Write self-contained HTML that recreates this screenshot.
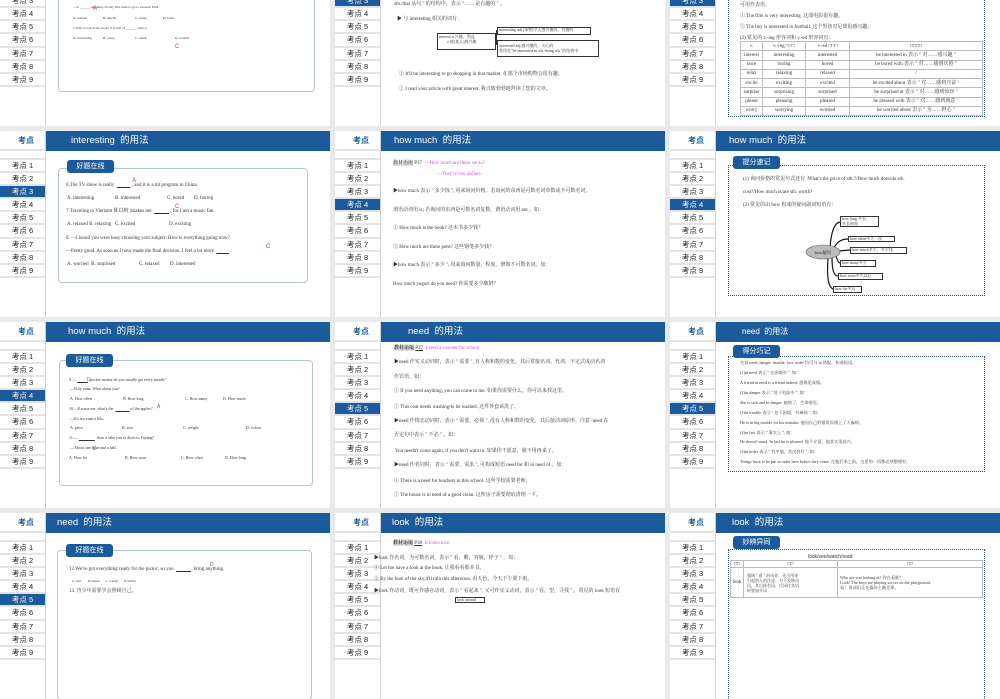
<!DOCTYPE html>
<html><head><meta charset="utf-8"><style>
*{margin:0;padding:0;box-sizing:border-box}
body{width:1000px;height:600px;background:#e9e9e9;position:relative;overflow:hidden;font-family:"Liberation Serif","Noto Serif CJK SC",serif;color:#333}
.s{position:absolute;width:330px;height:186px;background:#fff;overflow:hidden}
.sb{position:absolute;left:0;top:0;width:46px;height:186px;border-right:1px solid #d0d0d0;background:#fff;font-family:"Liberation Sans","Noto Sans CJK SC",sans-serif}
.sh{height:20px;line-height:20px;text-align:right;padding-right:11px;color:#1b5b9b;font-weight:bold;font-size:8px;border-bottom:2px solid #e4e4e4}
.sp{height:9px;border-bottom:2px solid #e4e4e4}
.it{height:13.1px;line-height:12px;font-size:7.5px;text-align:center;border-bottom:2px solid #e4e4e4;color:#222}
.it.a{background:#1b5b9b;color:#fff}
.hd{position:absolute;left:46px;top:0;width:284px;height:20px;background:#1b5b9b;color:#fff;font-family:"Liberation Sans","Noto Sans CJK SC",sans-serif;font-size:9.5px;line-height:20px}
.t{position:absolute;white-space:nowrap;font-size:5px;line-height:6px}
.r{position:absolute;color:#d23a4a;font-size:6px;font-family:"Liberation Sans",sans-serif}
.bx{position:absolute;border:1px solid #b7c4d3;border-radius:4px}
.db{position:absolute;border:1px dotted #2a4d7a}
.lb{position:absolute;width:47px;height:13px;background:#1b5b9b;color:#fff;border-radius:3px;font-family:"Liberation Sans","Noto Sans CJK SC",sans-serif;font-size:7px;line-height:13px;text-align:center}
.m{color:#d64fd6}
.g{background:#ddd}
table{border-collapse:collapse}
td{border:1px solid #bbb;text-align:center;font-size:5px;line-height:5px;padding:0}
.mb{position:absolute;border:1px solid #333;background:#fff;font-size:4px;line-height:4.5px;padding:0 1px;white-space:nowrap}
</style></head><body>

<!-- ROW 0 -->
<div class="s" style="left:0;top:-60px">
<div class="sb"><div class="sh">考点</div><div class="sp"></div><div class="it">考点 1</div><div class="it">考点 2</div><div class="it">考点 3</div><div class="it">考点 4</div><div class="it">考点 5</div><div class="it">考点 6</div><div class="it">考点 7</div><div class="it">考点 8</div><div class="it">考点 9</div></div>
<div class="hd"></div>
<div class="bx" style="left:58px;top:20px;width:257px;height:132px"></div>
<div class="t" style="left:73px;top:64px;font-size:3.5px">—It ______ amazing. It's my first time to go to Jurassic Park.</div>
<div class="r" style="left:93px;top:66px">A</div>
<div class="t" style="left:73px;top:75px;font-size:3.5px">A. sounds</div><div class="t" style="left:103px;top:75px;font-size:3.5px">B. smells</div><div class="t" style="left:135px;top:75px;font-size:3.5px">C. tastes</div><div class="t" style="left:163px;top:75px;font-size:3.5px">D. feels</div>
<div class="t" style="left:73px;top:85px;font-size:3.5px">5.Why not pick the book? It is full of ______ advice.</div>
<div class="t" style="left:73px;top:95px;font-size:3.5px">A. interesting</div><div class="t" style="left:103px;top:95px;font-size:3.5px">B. crazy</div><div class="t" style="left:135px;top:95px;font-size:3.5px">C. usual</div><div class="t" style="left:175px;top:95px;font-size:3.5px">D. terrible</div>
<div class="r" style="left:175px;top:104px">C</div>
</div>

<div class="s" style="left:335px;top:-60px">
<div class="sb"><div class="sh">考点</div><div class="sp"></div><div class="it">考点 1</div><div class="it">考点 2</div><div class="it a">考点 3</div><div class="it">考点 4</div><div class="it">考点 5</div><div class="it">考点 6</div><div class="it">考点 7</div><div class="it">考点 8</div><div class="it">考点 9</div></div>
<div class="hd"></div>
<div class="t" style="left:59px;top:62px">sth./that 从句 " 的结构中，表示 "…… 是有趣的 " 。</div>
<div class="t" style="left:62px;top:77px">▶ 与 interesting 相关的词有：</div>
<div class="mb" style="left:102px;top:93px;width:59px;height:17px;border-width:1px;line-height:5px">interest n.兴趣，利益<br>&nbsp;&nbsp;&nbsp;&nbsp;&nbsp;&nbsp;&nbsp;&nbsp;v.使(某人)感兴趣</div>
<div style="position:absolute;left:161px;top:90px;width:2px;height:15px;border:1px solid #333;border-right:none"></div>
<div class="mb" style="left:162px;top:87px;width:94px;height:8px">interesting adj.(事物)令人感兴趣的，有趣的</div>
<div class="mb" style="left:162px;top:100px;width:102px;height:17px;line-height:5px;padding-top:2px">interested adj.感兴趣的，关心的<br>常用在"be interested in sth./doing sth."的结构中</div>
<div class="t" style="left:64px;top:132px">① It'll be interesting to go shopping in that market. 在那个市场购物会很有趣。</div>
<div class="t" style="left:64px;top:147px">② I read your article with great interest. 我兴致勃勃地拜读了您的文章。</div>
</div>

<div class="s" style="left:670px;top:-60px">
<div class="sb"><div class="sh">考点</div><div class="sp"></div><div class="it">考点 1</div><div class="it">考点 2</div><div class="it a">考点 3</div><div class="it">考点 4</div><div class="it">考点 5</div><div class="it">考点 6</div><div class="it">考点 7</div><div class="it">考点 8</div><div class="it">考点 9</div></div>
<div class="hd"></div>
<div class="db" style="left:58px;top:20px;width:257px;height:157px;border-top:none"></div>
<div class="t" style="left:70px;top:63px">可用作表语。</div>
<div class="t" style="left:70px;top:74px">① The film is very interesting. 这部电影很有趣。</div>
<div class="t" style="left:70px;top:85px">② The boy is interested in football. 这个男孩对足球很感兴趣。</div>
<div class="t" style="left:70px;top:96px">(2) 常见的 v.-ing 形容词和 v.-ed 形容词有：</div>
<table style="position:absolute;left:70px;top:101px;width:243px;height:75px">
<tr><td style="width:22px">v.</td><td style="width:43px">v.-ing □□□</td><td style="width:44px">v.-ed □□□</td><td>□□□□</td></tr>
<tr><td>interest</td><td>interesting</td><td>interested</td><td>be interested in 表示 " 对……感兴趣 "</td></tr>
<tr><td>bore</td><td>boring</td><td>bored</td><td>be bored with 表示 " 对……感到厌倦 "</td></tr>
<tr><td>relax</td><td>relaxing</td><td>relaxed</td><td>/</td></tr>
<tr><td>excite</td><td>exciting</td><td>excited</td><td>be excited about 表示 " 对……感到兴奋 "</td></tr>
<tr><td>surprise</td><td>surprising</td><td>surprised</td><td>be surprised at 表示 " 对……感到惊讶 "</td></tr>
<tr><td>please</td><td>pleasing</td><td>pleased</td><td>be pleased with 表示 " 对……感到满意 "</td></tr>
<tr><td>worry</td><td>worrying</td><td>worried</td><td>be worried about 表示 " 为……担心 "</td></tr>
</table>
</div>

<!-- ROW 1 -->
<div class="s" style="left:0;top:131px">
<div class="sb"><div class="sh">考点</div><div class="sp"></div><div class="it">考点 1</div><div class="it">考点 2</div><div class="it a">考点 3</div><div class="it">考点 4</div><div class="it">考点 5</div><div class="it">考点 6</div><div class="it">考点 7</div><div class="it">考点 8</div><div class="it">考点 9</div></div>
<div class="hd" style="padding-left:25px">interesting &nbsp;的用法</div>
<div class="bx" style="left:58px;top:37px;width:250px;height:115px"></div>
<div class="lb" style="left:67px;top:29px">好题在线</div>
<div class="t" style="left:66px;top:52px">6.The TV show is really &nbsp;<u>&nbsp;&nbsp;&nbsp;&nbsp;&nbsp;&nbsp;&nbsp;&nbsp;&nbsp;&nbsp;&nbsp;</u> , and it is a hit program in China.</div>
<div class="r" style="left:132px;top:47px">A</div>
<div class="t" style="left:67px;top:65px">A. interesting</div><div class="t" style="left:115px;top:65px">B. interested</div><div class="t" style="left:167px;top:65px">C. bored</div><div class="t" style="left:194px;top:65px">D. boring</div>
<div class="t" style="left:66px;top:78px">7.Traveling to Vietnam 陈以纳 )makes me &nbsp;<u>&nbsp;&nbsp;&nbsp;&nbsp;&nbsp;&nbsp;&nbsp;&nbsp;&nbsp;&nbsp;&nbsp;&nbsp;</u> , for I am a music fan.</div>
<div class="r" style="left:175px;top:73px">C</div>
<div class="t" style="left:67px;top:91px">A. relaxed B. relaxing &nbsp;&nbsp;C. excited</div><div class="t" style="left:169px;top:91px">D. exciting</div>
<div class="t" style="left:66px;top:105px">8. —I heard you were busy choosing your subject. How is everything going now?</div>
<div class="t" style="left:66px;top:118px">—Pretty good. As soon as I have made the final decision, I feel a lot more &nbsp;<u>&nbsp;&nbsp;&nbsp;&nbsp;&nbsp;&nbsp;&nbsp;&nbsp;&nbsp;&nbsp;</u> .</div>
<div class="r" style="left:266px;top:113px">C</div>
<div class="t" style="left:67px;top:131px">A. worried &nbsp;B. surprised</div><div class="t" style="left:139px;top:131px">C. relaxed</div><div class="t" style="left:170px;top:131px">D. interested</div>
</div>

<div class="s" style="left:335px;top:131px">
<div class="sb"><div class="sh">考点</div><div class="sp"></div><div class="it">考点 1</div><div class="it">考点 2</div><div class="it">考点 3</div><div class="it a">考点 4</div><div class="it">考点 5</div><div class="it">考点 6</div><div class="it">考点 7</div><div class="it">考点 8</div><div class="it">考点 9</div></div>
<div class="hd" style="padding-left:13px">how much &nbsp;的用法</div>
<div class="t" style="left:58px;top:30px"><span class="g">教材语境</span> P37 &nbsp;<span class="m">—How much are these socks?</span></div>
<div class="t m" style="left:102px;top:41px">—They're two dollars.</div>
<div class="t" style="left:58px;top:58px">▶how much 表示 " 多少钱 ", 用来询问价格。若询问的东西是可数名词单数或不可数名词，</div>
<div class="t" style="left:58px;top:77px">谓语动词用 is; 若询问的东西是可数名词复数，谓语动词用 are 。如：</div>
<div class="t" style="left:58px;top:95px">① How much is the book? 这本书多少钱？</div>
<div class="t" style="left:58px;top:114px">② How much are these pens? 这些钢笔多少钱？</div>
<div class="t" style="left:58px;top:132px">▶how much 表示 " 多少 ", 用来询问数量、程度，修饰不可数名词。如：</div>
<div class="t" style="left:58px;top:151px">How much yogurt do you need? 你需要多少酸奶？</div>
</div>

<div class="s" style="left:670px;top:131px">
<div class="sb"><div class="sh">考点</div><div class="sp"></div><div class="it">考点 1</div><div class="it">考点 2</div><div class="it">考点 3</div><div class="it a">考点 4</div><div class="it">考点 5</div><div class="it">考点 6</div><div class="it">考点 7</div><div class="it">考点 8</div><div class="it">考点 9</div></div>
<div class="hd" style="padding-left:13px">how much &nbsp;的用法</div>
<div class="db" style="left:58px;top:34px;width:257px;height:131px"></div>
<div class="lb" style="left:63px;top:25px">提分速记</div>
<div class="t" style="left:73px;top:46px">(1) 询问价格的常见句式还有 :What's the price of sth.?/How much does/do sth.</div>
<div class="t" style="left:73px;top:59px">cost?/How much is/are sth. worth?</div>
<div class="t" style="left:73px;top:72px">(2) 常见的由 how 构成的疑问副词短语有：</div>
<svg style="position:absolute;left:0;top:0" width="330" height="186">
<g fill="none" stroke="#111" stroke-width="1.2">
<path d="M160 116 Q162 92 170 91"/><path d="M164 117 Q168 108 178 108"/><path d="M168 120 L180 119"/><path d="M166 125 Q168 132 170 132"/><path d="M162 127 Q162 145 168 145"/><path d="M158 128 Q156 155 163 158"/>
</g>
<ellipse cx="153" cy="121" rx="17" ry="7" fill="#bbb" stroke="#666" stroke-width=".6"/>
<text x="153" y="123" font-size="4.5" text-anchor="middle" font-family="Liberation Serif,Noto Serif CJK SC,serif" fill="#222">how疑问</text>
</svg>
<div class="mb" style="left:170px;top:85px;width:39px;height:11px">how long 多长；<br>多长时间</div>
<div class="mb" style="left:178px;top:105px;width:47px;height:6px">how often多久一次</div>
<div class="mb" style="left:180px;top:116px;width:57px;height:7px">how much多少；多少钱</div>
<div class="mb" style="left:170px;top:129px;width:36px;height:7px">how many多少</div>
<div class="mb" style="left:168px;top:142px;width:45px;height:7px">how soon多久以后</div>
<div class="mb" style="left:163px;top:155px;width:29px;height:7px">how far多远</div>
</div>

<!-- ROW 2 -->
<div class="s" style="left:0;top:322px">
<div class="sb"><div class="sh">考点</div><div class="sp"></div><div class="it">考点 1</div><div class="it">考点 2</div><div class="it">考点 3</div><div class="it a">考点 4</div><div class="it">考点 5</div><div class="it">考点 6</div><div class="it">考点 7</div><div class="it">考点 8</div><div class="it">考点 9</div></div>
<div class="hd" style="padding-left:22px">how much &nbsp;的用法</div>
<div class="bx" style="left:59px;top:38px;width:254px;height:126px"></div>
<div class="lb" style="left:66px;top:32px">好题在线</div>
<div class="t" style="left:69px;top:55px;font-size:4px">9.— <u>&nbsp;&nbsp;&nbsp;&nbsp;&nbsp;&nbsp;&nbsp;&nbsp;&nbsp;&nbsp;&nbsp;</u> &nbsp;pocket money do you usually get every month?</div>
<div class="r" style="left:87px;top:55px;font-size:5px">D</div>
<div class="t" style="left:70px;top:64px;font-size:4px">—Fifty yuan. What about you?</div>
<div class="t" style="left:70px;top:74px;font-size:4px">A. How often</div><div class="t" style="left:123px;top:74px;font-size:4px">B. How long</div><div class="t" style="left:185px;top:74px;font-size:4px">C. How many</div><div class="t" style="left:223px;top:74px;font-size:4px">D. How much</div>
<div class="t" style="left:69px;top:84px;font-size:4px">10.—Excuse me, what's the &nbsp;<u>&nbsp;&nbsp;&nbsp;&nbsp;&nbsp;&nbsp;&nbsp;&nbsp;&nbsp;&nbsp;&nbsp;&nbsp;&nbsp;&nbsp;</u> of the apples?</div>
<div class="r" style="left:157px;top:82px;font-size:5px">A</div>
<div class="t" style="left:70px;top:94px;font-size:4px">—It's ten yuan a kilo.</div>
<div class="t" style="left:70px;top:103px;font-size:4px">A. price</div><div class="t" style="left:122px;top:103px;font-size:4px">B. size</div><div class="t" style="left:183px;top:103px;font-size:4px">C. weight</div><div class="t" style="left:246px;top:103px;font-size:4px">D. colour</div>
<div class="t" style="left:69px;top:113px;font-size:4px">11.— <u>&nbsp;&nbsp;&nbsp;&nbsp;&nbsp;&nbsp;&nbsp;&nbsp;&nbsp;&nbsp;&nbsp;&nbsp;&nbsp;&nbsp;&nbsp;&nbsp;</u> &nbsp;does it take you to drive to Fuyang?</div>
<div class="t" style="left:70px;top:123px;font-size:4px">—About one hour and a half.</div>
<div class="r" style="left:93px;top:124px;font-size:5px">D</div>
<div class="t" style="left:69px;top:133px;font-size:4px">A. How far</div><div class="t" style="left:125px;top:133px;font-size:4px">B. How soon</div><div class="t" style="left:181px;top:133px;font-size:4px">C. How often</div><div class="t" style="left:225px;top:133px;font-size:4px">D. How long</div>
</div>

<div class="s" style="left:335px;top:322px">
<div class="sb"><div class="sh">考点</div><div class="sp"></div><div class="it">考点 1</div><div class="it">考点 2</div><div class="it">考点 3</div><div class="it">考点 4</div><div class="it a">考点 5</div><div class="it">考点 6</div><div class="it">考点 7</div><div class="it">考点 8</div><div class="it">考点 9</div></div>
<div class="hd" style="padding-left:27px">need &nbsp;的用法</div>
<div class="t" style="left:59px;top:24px"><b class="g">教材语境</b> <u>P37</u> &nbsp;<span class="m">I need a sweater for school.</span></div>
<div class="t" style="left:59px;top:38px">▶need 作实义动词时，表示 " 需要 ", 有人称和数的变化，其后常接名词、代词、不定式或动名词</div>
<div class="t" style="left:59px;top:53px">作宾语。如：</div>
<div class="t" style="left:59px;top:67px">① If you need anything, you can come to me. 如果你需要什么，你可以来找这里。</div>
<div class="t" style="left:59px;top:83px">② This coat needs washing/to be washed. 这件外套该洗了。</div>
<div class="t" style="left:59px;top:97px">▶need 作情态动词时，表示 " 需要，必须 ", 没有人称和数的变化，其后接动词原形。注意 :need 在</div>
<div class="t" style="left:59px;top:111px">否定句中表示 " 不必 " 。如：</div>
<div class="t" style="left:60px;top:127px">You needn't come again, if you don't want to. 如果你不愿意，就不用再来了。</div>
<div class="t" style="left:59px;top:141px">▶need 作名词时，表示 " 需要，需求 ", 可构成短语 need for 和 in need of 。如：</div>
<div class="t" style="left:59px;top:157px">① There is a need for teachers in this school. 这所学校需要老师。</div>
<div class="t" style="left:59px;top:171px">② The house is in need of a good clean. 这所房子需要彻底清理一下。</div>
</div>

<div class="s" style="left:670px;top:322px">
<div class="sb"><div class="sh">考点</div><div class="sp"></div><div class="it">考点 1</div><div class="it">考点 2</div><div class="it">考点 3</div><div class="it">考点 4</div><div class="it a">考点 5</div><div class="it">考点 6</div><div class="it">考点 7</div><div class="it">考点 8</div><div class="it">考点 9</div></div>
<div class="hd" style="padding-left:26px;font-size:8px">need &nbsp;的用法</div>
<div class="db" style="left:58px;top:34px;width:257px;height:116px"></div>
<div class="lb" style="left:63px;top:23px">得分巧记</div>
<div class="t" style="left:70px;top:38px;font-size:4.2px">名词 need, danger, trouble, fact, order 均可与 in 搭配，构成短语。</div>
<div class="t" style="left:70px;top:48px;font-size:4.2px">(1)in need 表示 " 在困境中 ", 如：</div>
<div class="t" style="left:70px;top:58px;font-size:4.2px">A friend in need is a friend indeed. 患难见真情。</div>
<div class="t" style="left:70px;top:68px;font-size:4.2px">(2)in danger 表示 " 处于危险中 ", 如：</div>
<div class="t" style="left:70px;top:78px;font-size:4.2px">She is sick and in danger. 她病了，生命垂危。</div>
<div class="t" style="left:70px;top:88px;font-size:4.2px">(3)in trouble 表示 " 处于困境，有麻烦 ", 如：</div>
<div class="t" style="left:70px;top:98px;font-size:4.2px">He is in big trouble for his mistake. 他因自己的错误而遇上了大麻烦。</div>
<div class="t" style="left:70px;top:108px;font-size:4.2px">(4)in fact 表示 " 事实上 ", 如：</div>
<div class="t" style="left:70px;top:117px;font-size:4.2px">He doesn't mind. In fact,he is pleased. 他不介意，他其实很高兴。</div>
<div class="t" style="left:70px;top:127px;font-size:4.2px">(5)in order 表示 " 有序地，状况良好 ", 如：</div>
<div class="t" style="left:70px;top:137px;font-size:4.2px">Things have to be put in order here before they come. 在他们来之前，这里的一切都必须整理好。</div>
</div>

<!-- ROW 3 -->
<div class="s" style="left:0;top:513px">
<div class="sb"><div class="sh">考点</div><div class="sp"></div><div class="it">考点 1</div><div class="it">考点 2</div><div class="it">考点 3</div><div class="it">考点 4</div><div class="it a">考点 5</div><div class="it">考点 6</div><div class="it">考点 7</div><div class="it">考点 8</div><div class="it">考点 9</div></div>
<div class="hd" style="padding-left:11px">need &nbsp;的用法</div>
<div class="bx" style="left:57px;top:37px;width:255px;height:150px"></div>
<div class="lb" style="left:66px;top:31px">好题在线</div>
<div class="t" style="left:69px;top:54px">12.We've got everything ready for the picnic, so you &nbsp;<u>&nbsp;&nbsp;&nbsp;&nbsp;&nbsp;&nbsp;&nbsp;&nbsp;&nbsp;&nbsp;&nbsp;&nbsp;</u> &nbsp;bring anything.</div>
<div class="r" style="left:210px;top:49px;font-size:5px">D</div>
<div class="t" style="left:72px;top:65px;font-size:3px">A. can't &nbsp;&nbsp;&nbsp;&nbsp;&nbsp;&nbsp;&nbsp;&nbsp;B. mustn't &nbsp;&nbsp;&nbsp;&nbsp;&nbsp;&nbsp;C. couldn't &nbsp;&nbsp;&nbsp;&nbsp;&nbsp;&nbsp;D. needn't</div>
<div class="t" style="left:69px;top:76px">13. 青少年需要学会照顾自己。</div>
</div>

<div class="s" style="left:335px;top:513px">
<div class="sb"><div class="sh">考点</div><div class="sp"></div><div class="it">考点 1</div><div class="it">考点 2</div><div class="it">考点 3</div><div class="it">考点 4</div><div class="it">考点 5</div><div class="it">考点 6</div><div class="it">考点 7</div><div class="it">考点 8</div><div class="it">考点 9</div></div>
<div class="hd" style="padding-left:11px">look &nbsp;的用法</div>
<div class="t" style="left:58px;top:28px"><b class="g">教材语境</b> <u>P38</u> &nbsp;<span class="m">It looks nice.</span></div>
<div class="t" style="left:39px;top:43px">▶look 作名词，为可数名词，表示 " 看，瞧，容貌，样子 " 。如：</div>
<div class="t" style="left:39px;top:53px">① Let me have a look at the book. 让我看看那本书。</div>
<div class="t" style="left:39px;top:64px">② By the look of the sky,it'll rain this afternoon. 看天色，今天下午要下雨。</div>
<div class="t" style="left:39px;top:76px">▶look 作动词，既可作感官动词，表示 " 看起来 ", 又可作实义动词，表示 " 看，望，寻找 " 。常见的 look 短语有</div>
<div class="mb" style="left:120px;top:84px;width:30px;height:6px">look around</div>
</div>

<div class="s" style="left:670px;top:513px">
<div class="sb"><div class="sh">考点</div><div class="sp"></div><div class="it">考点 1</div><div class="it">考点 2</div><div class="it">考点 3</div><div class="it">考点 4</div><div class="it">考点 5</div><div class="it">考点 6</div><div class="it">考点 7</div><div class="it">考点 8</div><div class="it">考点 9</div></div>
<div class="hd" style="padding-left:16px">look &nbsp;的用法</div>
<div class="db" style="left:58px;top:36px;width:257px;height:160px"></div>
<div class="lb" style="left:63px;top:23px">妙辨异同</div>
<div class="t" style="left:138px;top:41px;font-family:'Liberation Sans',sans-serif">look/see/watch/read</div>
<table style="position:absolute;left:60px;top:47px;width:253px">
<tr style="height:7px"><td style="width:13px">□□</td><td style="width:94px">□□</td><td>□□</td></tr>
<tr style="height:30px"><td>look</td><td style="text-align:left;font-size:4px;line-height:5px;padding-left:3px">强调 " 看 " 的动作，还可用来<br>引起别人的注意；为不及物动<br>词，其后接名词、代词作宾语<br>时要加介词</td><td style="text-align:left;font-size:4.2px;line-height:5px;padding-left:2px">Who are you looking at? 你在看谁？<br>Look! The boys are playing soccer on the playground.<br>看！男孩们正在操场上踢足球。</td></tr>
</table>
</div>

</body></html>
